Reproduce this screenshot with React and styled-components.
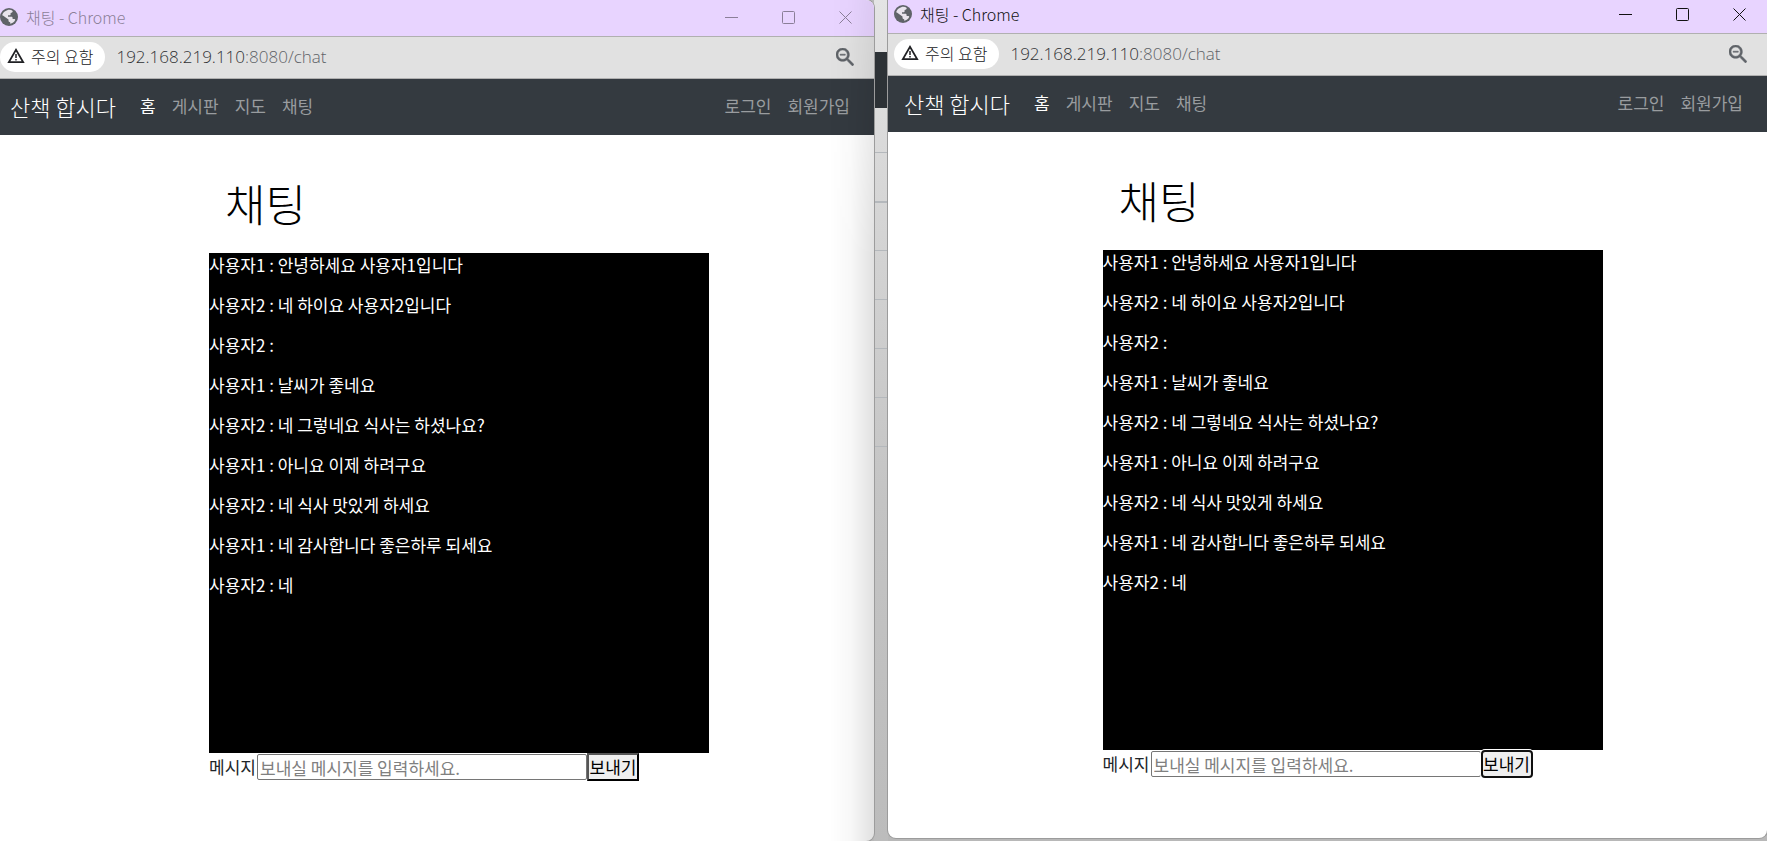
import React, { useId } from "react";
import styled, { createGlobalStyle } from "styled-components";

const GlobalStyle = createGlobalStyle`
  *, *::before, *::after { box-sizing: border-box; }
  body {
    margin: 0;
    background: #b8b8b8;
    color: #212529;
    font: 17px/24px "Noto Sans CJK KR", sans-serif;
  }
`;

const Desktop = styled.div`
  display: grid;
  grid-template-columns: minmax(0, 874fr) 14px minmax(0, 879fr);
  min-height: 100vh;
`;

const Window = styled.section`
  display: flex;
  flex-direction: column;
  overflow: hidden;
  background: #fff;
  border-radius: ${(p) => (p.$back ? "0 8px 8px 0" : "0 0 8px 8px")};
  margin-bottom: ${(p) => (p.$back ? 0 : 3)}px;
  box-shadow: 0 0 0 1px #9c9c9c;
  position: relative;
  z-index: 1;

  &::after {
    content: "";
    display: ${(p) => (p.$back ? "block" : "none")};
    position: absolute;
    inset: 0 0 0 auto;
    width: 44px;
    pointer-events: none;
    background: linear-gradient(to right, transparent, rgba(0, 0, 0, 0.03) 50%, rgba(0, 0, 0, 0.12));
    mask-image: linear-gradient(rgba(0, 0, 0, 0.4), #000 260px);
  }
`;

const Shell = styled.div`
  margin-left: ${(p) => (p.$back ? -6 : 0)}px;
`;

const TitleBar = styled.header`
  display: flex;
  align-items: center;
  gap: 8px;
  padding: ${(p) => (p.$back ? 3 : 0)}px ${(p) => (p.$back ? 21 : 20)}px 5px 6px;
  height: ${(p) => (p.$back ? 37 : 34)}px;
  background: #e8d4ff;
  border-bottom: 1px solid #b0b0b0;
  color: ${(p) => (p.$back ? "#8b7f98" : "#111")};
`;

const WindowTitle = styled.span`
  flex: 1;
  font-size: 16px;
  font-weight: 300;
`;

const WindowControls = styled.div`
  display: flex;
  gap: 43px;
`;

const IconButton = styled.button`
  display: flex;
  padding: 0;
  border: 0;
  background: none;
  color: inherit;
`;

const AddressBar = styled.div`
  display: flex;
  align-items: center;
  height: 42px;
  padding: 0 20px 2px 6px;
  background: #e1e1e1;
  border-bottom: 1px solid #b0b0b0;
  color: #5f6368;
`;

const SecurityChip = styled.button`
  display: flex;
  align-items: center;
  gap: 6px;
  height: 30px;
  padding: 0 12px 2px 7px;
  border: 0;
  border-radius: 15px;
  background: #fff;
  color: #202124;
  font: 300 16px/24px "Noto Sans CJK KR", sans-serif;
`;

const Address = styled.span`
  flex: 1;
  margin-left: 11px;
  font: 300 17px/24px "Open Sans", "Noto Sans", sans-serif;

  b { color: #303134; font-weight: inherit; }
`;

const NavBar = styled.nav`
  display: flex;
  align-items: center;
  height: 56px;
  padding: 0 16px 2px;
  background: #343a40;
`;

const Brand = styled.a`
  margin-right: 16px;
  color: #fff;
  font-size: 22px;
  font-weight: 300;
  text-decoration: none;
`;

const NavLinks = styled.div`
  display: flex;
  margin-left: ${(p) => (p.$end ? "auto" : 0)};
`;

const NavLink = styled.a`
  padding: 8px;
  color: ${(p) => (p.$active ? "#fff" : "#999c9f")};
  text-decoration: none;
`;

const Main = styled.main`
  width: 500px;
  max-width: 100%;
  margin-left: max(0px, calc(50% - 225px));
  padding-top: 36px;
`;

const Heading = styled.h1`
  margin: 0 0 18px;
  padding: 0 16px;
  color: #000;
  font-size: 44px;
  line-height: 64px;
  font-weight: 300;
`;

const Log = styled.div`
  min-height: 500px;
  background: #000;
  color: #fff;
`;

const Message = styled.p`
  margin: 0 0 16px;
`;

const Composer = styled.form`
  display: flex;
  align-items: center;
  height: 28px;
`;

const MessageLabel = styled.label`
  min-width: 48px;
`;

const MessageInput = styled.input`
  width: 330px;
  height: 26px;
  padding: 1px 2px;
  border: 1px solid #767676;
  border-radius: 2px;
  font: 17px/22px "Noto Sans CJK KR", sans-serif;

  &::placeholder { color: #808080; }
`;

const SendButton = styled.button`
  height: 28px;
  width: 52px;
  padding: 0;
  border: 2px solid;
  border-color: ${(p) => (p.$focused ? "#101010" : "#555 #000 #000 #555")};
  border-radius: ${(p) => (p.$focused ? 4 : 0)}px;
  box-shadow: ${(p) => (p.$focused ? "0 0 0 1px #fff" : "none")};
  background: #efefef;
  color: #000;
  font: 17px/22px "Noto Sans CJK KR", sans-serif;
`;

const Behind = styled.div`
  display: flex;
  flex-direction: column;
  background: linear-gradient(#e4e4e4, #d6d6d6 200px, #c4c4c4 500px, #bcbcbc);
`;

const BehindNav = styled.div`
  height: 56px;
  margin-top: 52px;
  margin-bottom: 44px;
  background: #2d3236;
`;

const BehindRow = styled.div`
  height: 49px;
  border-top: ${(p) => (p.$head ? 2 : 1)}px solid #b4b8bc;
`;

const GlobeIcon = () => (
  <svg width="18" height="18" viewBox="0 0 18 18" aria-hidden="true">
    <circle cx="9" cy="9" r="9" fill="#5f6368" />
    <path
      fill="#e8e4ec"
      d="M7.2 2.2c2.2-.7 4.2-.2 5.6.7-.2 1.2-1 1.9-2.2 2v1.3c0 .6-.4 1-1 1H8v1.5h3.4c.7 0 1.2.5 1.2 1.2v1.2h1.6c.6 0 1 .4 1 .9-1 2-2.8 3.4-5 3.8v-1.6c-1 0-1.7-.8-1.7-1.7v-1L2.2 6.900c-.4 1.400-.3 2.800 0 4-.9-3.200.4-7.200 5-8.700z"
    />
  </svg>
);

const WarningIcon = () => (
  <svg width="18" height="18" viewBox="0 0 18 18" fill="none" stroke="#202124" aria-hidden="true">
    <path d="M1.800 15.200 9 2.800l7.200 12.400z" strokeWidth="1.700" />
    <path d="M9 7v4M9 12v1.600" strokeWidth="1.500" />
  </svg>
);

const ZoomOutIcon = () => (
  <svg width="18" height="18" viewBox="3 3 17.5 17.5" fill="#5f6368" stroke="#5f6368" strokeWidth="0.500" aria-hidden="true">
    <path d="M15.5 14h-.79l-.28-.27C15.41 12.59 16 11.11 16 9.5 16 5.91 13.09 3 9.5 3S3 5.91 3 9.5 5.91 16 9.5 16c1.61 0 3.09-.59 4.23-1.57l.27.28v.79l5 4.99L20.49 19l-4.99-5zm-6 0C7.01 14 5 11.99 5 9.5S7.01 5 9.5 5 14 7.01 14 9.5 11.99 14 9.5 14zM7 9h5v1H7z" />
  </svg>
);

const controlShapes = [
  ["최소화", <path key="min" d="M0 6.5h13" />],
  ["최대화", <rect key="max" x="0.5" y="0.5" width="12" height="12" rx="1" />],
  ["닫기", <path key="close" d="m.5.5 12 12m0-12-12 12" />],
];

const links = ["홈", "게시판", "지도", "채팅"];

const messages = [
  "사용자1 : 안녕하세요 사용자1입니다",
  "사용자2 : 네 하이요 사용자2입니다",
  "사용자2 :",
  "사용자1 : 날씨가 좋네요",
  "사용자2 : 네 그렇네요 식사는 하셨나요?",
  "사용자1 : 아니요 이제 하려구요",
  "사용자2 : 네 식사 맛있게 하세요",
  "사용자1 : 네 감사합니다 좋은하루 되세요",
  "사용자2 : 네",
];

function ChatWindow({ back = false }) {
  const inputId = useId();
  return (
    <Window $back={back}>
      <Shell $back={back}>
        <TitleBar $back={back}>
          <GlobeIcon />
          <WindowTitle>채팅 - Chrome</WindowTitle>
          <WindowControls>
            {controlShapes.map(([label, shape]) => (
              <IconButton key={label} type="button" aria-label={label}>
                <svg width="14" height="13" viewBox="0 0 14 13" fill="none" stroke="currentColor">{shape}</svg>
              </IconButton>
            ))}
          </WindowControls>
        </TitleBar>
        <AddressBar>
          <SecurityChip type="button"><WarningIcon />주의 요함</SecurityChip>
          <Address><b>192.168.219.110</b>:8080/chat</Address>
          <IconButton type="button" aria-label="축소"><ZoomOutIcon /></IconButton>
        </AddressBar>
        <NavBar>
          <Brand href="#">산책 합시다</Brand>
          <NavLinks>
            {links.map((link, i) => <NavLink key={link} href="#" $active={i === 0}>{link}</NavLink>)}
          </NavLinks>
          <NavLinks $end>
            <NavLink href="#">로그인</NavLink>
            <NavLink href="#">회원가입</NavLink>
          </NavLinks>
        </NavBar>
        <Main>
          <Heading>채팅</Heading>
          <Log>
            {messages.map((text) => <Message key={text}>{text}</Message>)}
          </Log>
          <Composer onSubmit={(e) => e.preventDefault()}>
            <MessageLabel htmlFor={inputId}>메시지</MessageLabel>
            <MessageInput id={inputId} placeholder="보내실 메시지를 입력하세요." />
            <SendButton $focused={!back}>보내기</SendButton>
          </Composer>
        </Main>
      </Shell>
    </Window>
  );
}

export default function App() {
  return (
    <>
      <GlobalStyle />
      <Desktop>
        <ChatWindow back />
        <Behind aria-hidden="true">
          <BehindNav />
          <BehindRow />
          <BehindRow $head />
          <BehindRow />
          <BehindRow />
          <BehindRow />
          <BehindRow />
          <BehindRow />
        </Behind>
        <ChatWindow />
      </Desktop>
    </>
  );
}
